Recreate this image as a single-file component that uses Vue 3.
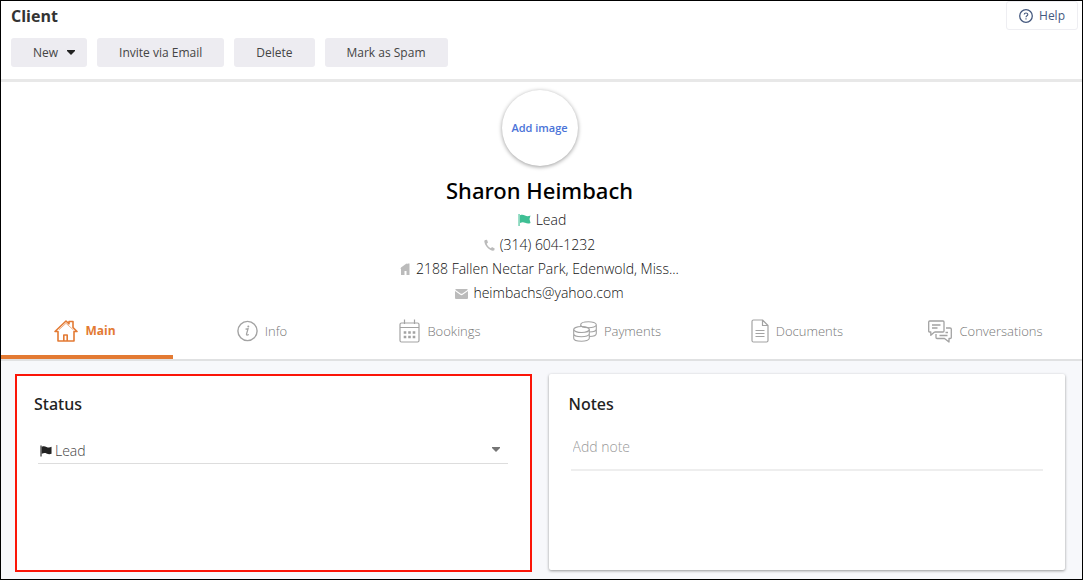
<script setup>
import { ref } from 'vue'

const activeTab = ref('Main')
const status = ref('Lead')
const note = ref('')
const tabs = ['Main', 'Info', 'Bookings', 'Payments', 'Documents', 'Conversations']
</script>

<template>
  <div class="page">
    <header class="header">
      <div class="title-row">
        <h1>Client</h1>
        <button type="button" class="help">
          <svg width="14" height="14" viewBox="0 0 14 14" fill="none" stroke="currentColor" aria-hidden="true">
            <circle cx="7" cy="7" r="6.3" stroke-width="1.3" />
            <path d="M5.2 5.6C5.2 3.4 8.8 3.4 8.8 5.5C8.8 6.8 7 6.8 7 8.3M7 9.3V10.5" stroke-width="1.1" />
          </svg>
          Help
        </button>
      </div>
      <div class="actions">
        <button type="button" class="new">
          New
          <svg width="8" height="5" viewBox="0 0 8 5" aria-hidden="true"><path d="M0 0H8V1L4 5L0 1Z" fill="#222" /></svg>
        </button>
        <button type="button">Invite via Email</button>
        <button type="button">Delete</button>
        <button type="button">Mark as Spam</button>
      </div>
    </header>

    <section class="profile">
      <button type="button" class="avatar">Add image</button>
      <h2>Sharon Heimbach</h2>
      <ul class="details">
        <li class="lead">
          <svg width="13" height="12" viewBox="0 0 13 12" aria-hidden="true">
            <path d="M0.5 0H1.6V12H0.5Z M2 1.3C4 0.4 5.5 0.8 7 1.6C9 2.5 10.5 2.4 12.5 1.5L11.5 5L12.5 9C10.5 9.8 9 9.6 7 8.7C5.5 8 4 8 2 9Z" fill="#3fbf94" />
          </svg>
          <span>Lead</span>
        </li>
        <li>
          <svg width="11" height="12" viewBox="0 0 11 12" aria-hidden="true">
            <path d="M1.2 1L3 0.7L4 3.6L2.7 4.7C3.5 6.7 5 8.3 6.9 9.2L8 8L10.7 9.4L10.3 11.2C9.5 12 7.8 11.7 6.1 10.7C3 9 0.9 6 0.4 3C0.2 2 0.5 1.3 1.2 1Z" fill="#bbb" />
          </svg>
          <span>(314) 604-1232</span>
        </li>
        <li>
          <svg width="11" height="12" viewBox="0 0 11 12" aria-hidden="true">
            <path d="M1 4.5L6.5 0.5L7.5 1.2V0.5H9.5V12H6.5V8H4.5V12H1V6H0.5Z" fill="#bbb" />
          </svg>
          <span>2188 Fallen Nectar Park, Edenwold, Miss...</span>
        </li>
        <li>
          <svg width="13" height="11" viewBox="0 0 13 11" aria-hidden="true">
            <path d="M1 1H12Q13 1 12.5 2L7.5 5.5Q6.5 6.2 5.5 5.5L0.5 2Q0 1 1 1ZM0 3L5 6.6Q6.5 7.7 8 6.6L13 3V10Q13 11 12 11H1Q0 11 0 10Z" fill="#bbb" />
          </svg>
          <span>heimbachs@yahoo.com</span>
        </li>
      </ul>
    </section>

    <nav class="tabs" aria-label="Client sections">
      <button
        v-for="tab in tabs"
        :key="tab"
        type="button"
        :class="{ active: activeTab === tab }"
        @click="activeTab = tab"
      >
        <svg v-if="tab === 'Main'" width="24" height="22" viewBox="0 0 24 22" fill="none" stroke="currentColor" stroke-width="1.6" stroke-linejoin="round" aria-hidden="true">
          <path d="M4 11.5H1L12 1L15 3.8V1.5H19V7.5L23 11.5H20V21H4ZM9.8 20.5V15H13.2V20.5" />
          <path d="M5 9.7L12 3.3L19.5 10" stroke-width="0.6" />
        </svg>
        <svg v-else-if="tab === 'Info'" width="21" height="22" viewBox="0 0 21 22" fill="none" stroke="currentColor" aria-hidden="true">
          <circle cx="10.5" cy="11" r="9.6" stroke-width="1.4" />
          <path d="M8.5 9.2L11 8.8L9.5 14.2Q9.4 15.7 11.8 14.5" stroke-width="1.3" />
          <circle cx="11.3" cy="6.5" r="1" fill="currentColor" stroke="none" />
        </svg>
        <svg v-else-if="tab === 'Bookings'" width="21" height="24" viewBox="0 0 21 24" fill="none" stroke="currentColor" stroke-width="1.2" aria-hidden="true">
          <rect x="1" y="4" width="19" height="19" rx="1.5" />
          <path d="M1 8.5H20M5.5 0.5V5M15.5 0.5V5" />
          <path d="M4.7 13.5H16.3M4.7 18H16.3" stroke-width="2.4" stroke-dasharray="2.6 1.9" />
        </svg>
        <svg v-else-if="tab === 'Payments'" width="24" height="21" viewBox="0 0 24 21" fill="none" stroke="currentColor" stroke-width="1.1" aria-hidden="true">
          <ellipse cx="8.5" cy="8.5" rx="7.8" ry="3" />
          <path d="M0.7 8.5V17.2C0.7 21.2 16.3 21.2 16.3 17.2V8.5M0.7 12.8C0.7 16.8 16.3 16.8 16.3 12.8" />
          <path d="M7.7 5.5V3.7C7.7 -0.3 23.3 -0.3 23.3 3.7V12.5C23.3 14.5 19.5 15.5 16.3 15.5M7.7 3.7C7.7 7.7 23.3 7.7 23.3 3.7M16.3 11C20 11 23.3 10 23.3 8" />
        </svg>
        <svg v-else-if="tab === 'Documents'" width="18" height="24" viewBox="0 0 18 24" fill="none" stroke="currentColor" stroke-width="1.2" stroke-linejoin="round" aria-hidden="true">
          <path d="M2.5 1H11.5L17 6.5V21.5Q17 23 15.5 23H2.5Q1 23 1 21.5V2.5Q1 1 2.5 1ZM11.5 1V6.5H17M4.5 11.5H13.5M4.5 14.5H13.5M4.5 17.5H13.5" />
        </svg>
        <svg v-else width="24" height="23" viewBox="0 0 24 23" fill="none" stroke="currentColor" stroke-width="1.3" stroke-linejoin="round" aria-hidden="true">
          <path d="M6.5 12L2.8 15.2V12H1.5Q0.7 12 0.7 11V2Q0.7 1 1.7 1H15Q16 1 16 2V11Q16 12 15 12H6.5M4 5H12.5M4 8H9.5" />
          <path d="M18 8H22Q23.3 8 23.3 9V17.5Q23.3 18.5 22 18.5H21V22L16.5 18.5H9Q8 18.5 8 17.5V14M11.5 15.5H19.5M17.5 12.5H20" />
        </svg>
        {{ tab }}
      </button>
    </nav>

    <main class="cards">
      <section class="card status">
        <h3><label for="status">Status</label></h3>
        <div class="select-wrap">
          <svg width="12" height="12" viewBox="0 0 13 12" aria-hidden="true">
            <path d="M0.5 0H1.7V12H0.5Z M2 1.3C4 0.4 5.5 0.8 7 1.6C9 2.5 10.5 2.4 12.5 1.5V9C10.5 9.8 9 9.6 7 8.7C5.5 8 4 8 2 9Z" fill="#222" />
          </svg>
          <select id="status" v-model="status">
            <option>Lead</option>
          </select>
          <svg class="caret" width="8" height="5" viewBox="0 0 8 5" aria-hidden="true"><path d="M0 0H8V1L4 5L0 1Z" fill="#757575" /></svg>
        </div>
      </section>
      <section class="card notes">
        <h3><label for="note">Notes</label></h3>
        <input id="note" v-model="note" type="text" placeholder="Add note" />
      </section>
    </main>
  </div>
</template>

<style>
body {
  margin: 0;
}
</style>

<style scoped>
.page {
  box-sizing: border-box;
  min-height: 100vh;
  display: flex;
  flex-direction: column;
  border: 1px solid #000;
  background: #f7f8fb;
  color: #111;
  font: 300 14px/24px "Open Sans", sans-serif;
}
h1, h2, h3, ul {
  margin: 0;
  padding: 0;
}
button, select, input {
  margin: 0;
  padding: 0;
  border: 0;
  background: none;
  color: inherit;
  font: inherit;
}
button {
  cursor: pointer;
}
.header {
  padding-bottom: 12px;
  border-bottom: 3px solid #e8e8e8;
  background: #fff;
}
.title-row {
  display: flex;
  justify-content: space-between;
  align-items: flex-start;
  height: 37px;
  padding: 0 4px 0 10px;
}
h1 {
  color: #333;
  font-size: 16px;
  line-height: 30px;
  font-weight: 700;
}
.help {
  display: flex;
  align-items: center;
  gap: 6px;
  height: 29px;
  padding: 0 12px;
  border: 1px solid #eeeef2;
  border-radius: 3px;
  color: #45597f;
  font-size: 12px;
  font-weight: 400;
}
.actions {
  display: flex;
  gap: 10px;
  padding: 0 10px;
}
.actions button {
  height: 29px;
  padding: 0 22px;
  border-radius: 3px;
  background: #edecf1;
  color: #444;
  font-size: 12px;
  font-weight: 400;
}
.actions .new {
  display: flex;
  align-items: center;
  gap: 9px;
  padding-right: 12px;
}
.profile {
  display: flex;
  flex-direction: column;
  align-items: center;
  padding: 8px 4px 0 0;
  background: #fff;
}
.avatar {
  width: 76px;
  height: 76px;
  border-radius: 50%;
  box-shadow: 0 1px 4px rgba(0, 0, 0, 0.4);
  color: #4a73d8;
  font-size: 11px;
  font-weight: 600;
}
h2 {
  margin-top: 8px;
  color: #000;
  font-family: "Noto Sans", "Open Sans", sans-serif;
  font-size: 22px;
  line-height: 32px;
  font-weight: 500;
}
.details {
  margin-top: 2px;
  list-style: none;
}
.details li {
  display: flex;
  align-items: center;
  justify-content: center;
  gap: 5px;
}
.details .lead {
  margin-bottom: 1px;
  padding-left: 5px;
}
.tabs {
  display: grid;
  grid-template-columns: 172fr 178fr 178fr 176fr 184fr 193fr;
  background: #fff;
  border-bottom: 2px solid #e0e1e2;
}
.tabs button {
  display: flex;
  align-items: center;
  justify-content: center;
  gap: 7px;
  height: 54px;
  padding-top: 2px;
  border-bottom: 4px solid transparent;
  color: #777;
  font-size: 13px;
}
.tabs svg {
  color: #a3a3a3;
}
.tabs .active,
.tabs .active svg {
  color: #e37a33;
}
.tabs .active {
  padding-right: 4px;
  border-color: #e37a33;
  font-size: 12px;
  font-weight: 700;
}
.cards {
  flex: 1;
  display: grid;
  grid-template-columns: 1fr 1fr;
  gap: 17px;
  padding: 13px 17px 7px 14px;
}
.card {
  box-sizing: border-box;
  min-height: 196px;
  background: #fff;
}
.status {
  padding: 16px 22px 16px 17px;
  border: 2px solid #fb1508;
}
.notes {
  margin-bottom: 2px;
  padding: 18px 22px 16px 20px;
  border-radius: 2px;
  box-shadow: 0 1px 3px rgba(0, 0, 0, 0.4);
}
h3 {
  color: #222;
  font-family: "Noto Sans", "Open Sans", sans-serif;
  font-size: 16px;
  line-height: 24px;
  font-weight: 500;
}
.select-wrap {
  position: relative;
  display: flex;
  align-items: center;
  gap: 3px;
  height: 25px;
  margin: 22px 0 0 4px;
  padding-left: 2px;
  border-bottom: 1px solid #ddd;
}
select {
  flex: 1;
  appearance: none;
  color: #444;
}
.caret {
  position: absolute;
  right: 8px;
  top: 9px;
  pointer-events: none;
}
input {
  box-sizing: border-box;
  width: calc(100% - 2px);
  height: 48px;
  margin: 7px 0 0 2px;
  padding: 0 2px;
  border-bottom: 2px solid #eee;
}
input::placeholder {
  color: #999;
  opacity: 1;
}
</style>
